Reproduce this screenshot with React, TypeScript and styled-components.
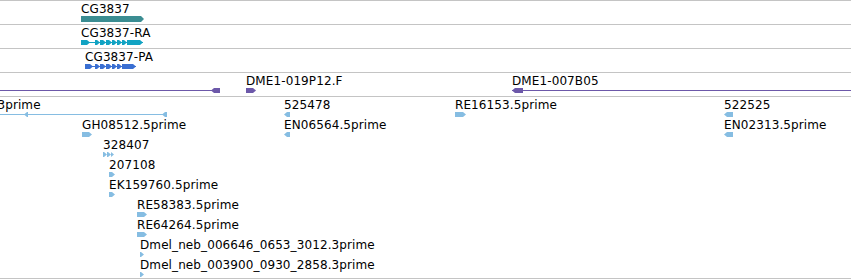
import React from 'react';
import styled, { createGlobalStyle } from 'styled-components';

const GlobalStyle = createGlobalStyle`
    html, body {
        margin: 0;
        padding: 0;
        background: #fff;
    }
    body {
        font-family: "DejaVu Sans", Verdana, sans-serif;
        color: #000;
    }
`;

export const Browser = styled.div`
    width: 851px;
    height: 280px;
    overflow: hidden;
    border-top: 1px solid #c4c4c4;
    box-sizing: border-box;
`;

export const Track = styled.div<{ $height: number }>`
    position: relative;
    height: ${(p) => p.$height}px;
    border-bottom: 1px solid #c4c4c4;
    overflow: hidden;
`;

// features sit on the track canvas at their genomic x; the row stacks them
export const Feature = styled.div.attrs<{ $x: number; $row: number }>((p) => ({
    style: { left: p.$x, top: p.$row * 20 + 1 },
}))<{ $x: number; $row: number }>`
    position: absolute;
    display: flex;
    flex-direction: column;
    align-items: flex-start;
`;

export const Label = styled.span`
    display: block;
    height: 14px;
    font-size: 12px;
    line-height: 14px;
    letter-spacing: 0.1px;
    white-space: nowrap;
`;

type Exon = [number, number, 1 | -1];

interface GlyphProps {
    exons: Exon[];
    color: string;
    line?: [number, number];
    h?: number;
}

const Glyph: React.FC<GlyphProps> = ({ exons, color, line, h = 5 }) => {
    const width = Math.max(...exons.map((e) => e[1]), line ? line[1] : 0);
    const mid = h / 2;
    return (
        <svg width={width} height={h} style={{ display: 'block', overflow: 'visible' }}>
            {line && <rect x={line[0]} y={Math.floor(mid - 0.5)} width={line[1] - line[0]} height={1} fill={color} />}
            {exons.map(([a, b, dir], i) => {
                const tip = Math.min(3, b - a);
                const pts =
                    dir === 1
                        ? `${a},0 ${b - tip},0 ${b},${mid} ${b - tip},${h} ${a},${h}`
                        : `${a + tip},0 ${b},0 ${b},${h} ${a + tip},${h} ${a},${mid}`;
                return <polygon key={i} points={pts} fill={color} />;
            })}
        </svg>
    );
};

const TEAL = '#3b8d92';
const CYAN = '#12a3c3';
const BLUE = '#3a6fd2';
const PURPLE = '#6c58a9';
const EST = '#86bde2';

const ests: { label: string; x: number; row: number; exons: Exon[]; line?: [number, number] }[] = [
    { label: 'GM01234.3prime', x: -65, row: 0, exons: [[89, 93, -1], [227, 232, -1]], line: [0, 232] },
    { label: '525478', x: 284, row: 0, exons: [[0, 6, -1]] },
    { label: 'EN06564.5prime', x: 284, row: 1, exons: [[0, 6, -1]] },
    { label: 'RE16153.5prime', x: 455, row: 0, exons: [[0, 11, 1]] },
    { label: '522525', x: 724, row: 0, exons: [[0, 9, -1]] },
    { label: 'EN02313.5prime', x: 724, row: 1, exons: [[0, 9, -1]] },
    { label: 'GH08512.5prime', x: 82, row: 1, exons: [[0, 10, 1]] },
    { label: '328407', x: 103, row: 2, exons: [[0, 4, 1], [4, 8, 1], [8, 11, 1]] },
    { label: '207108', x: 109, row: 3, exons: [[0, 6, 1]] },
    { label: 'EK159760.5prime', x: 109, row: 4, exons: [[0, 6, 1]] },
    { label: 'RE58383.5prime', x: 137, row: 5, exons: [[0, 10, 1]] },
    { label: 'RE64264.5prime', x: 137, row: 6, exons: [[0, 10, 1]] },
    { label: 'Dmel_neb_006646_0653_3012.3prime', x: 140, row: 7, exons: [[0, 4, 1]] },
    { label: 'Dmel_neb_003900_0930_2858.3prime', x: 140, row: 8, exons: [[0, 4, 1]] },
];

const App: React.FC = () => {
    return (
        <>
            <GlobalStyle />
            <Browser>
                <Track $height={23}>
                    <Feature $x={81} $row={0}>
                        <Label>CG3837</Label>
                        <Glyph color={TEAL} h={6} exons={[[0, 63, 1]]} />
                    </Feature>
                </Track>
                <Track $height={23}>
                    <Feature $x={81} $row={0}>
                        <Label>CG3837-RA</Label>
                        <Glyph
                            color={CYAN}
                            line={[0, 62]}
                            exons={[[0, 9, 1], [14, 19, 1], [19, 25, 1], [25, 31, 1], [31, 36, 1], [36, 41, 1], [41, 46, 1], [46, 62, 1]]}
                        />
                    </Feature>
                </Track>
                <Track $height={23}>
                    <Feature $x={85} $row={0}>
                        <Label>CG3837-PA</Label>
                        <Glyph
                            color={BLUE}
                            line={[0, 51]}
                            exons={[[0, 8, 1], [10, 15, 1], [15, 21, 1], [21, 27, 1], [27, 32, 1], [32, 37, 1], [37, 51, 1]]}
                        />
                    </Feature>
                </Track>
                <Track $height={23}>
                    <Feature $x={0} $row={0}>
                        <Label />
                        <Glyph color={PURPLE} line={[0, 220]} exons={[[211, 220, -1]]} />
                    </Feature>
                    <Feature $x={246} $row={0}>
                        <Label>DME1-019P12.F</Label>
                        <Glyph color={PURPLE} exons={[[0, 10, 1]]} />
                    </Feature>
                    <Feature $x={512} $row={0}>
                        <Label>DME1-007B05</Label>
                        <Glyph color={PURPLE} line={[0, 345]} exons={[[0, 11, -1]]} />
                    </Feature>
                </Track>
                <Track $height={181}>
                    {ests.map((e) => (
                        <Feature key={e.label} $x={e.x} $row={e.row}>
                            <Label>{e.label}</Label>
                            <Glyph color={EST} exons={e.exons} line={e.line} />
                        </Feature>
                    ))}
                </Track>
            </Browser>
        </>
    );
};

export default App;
